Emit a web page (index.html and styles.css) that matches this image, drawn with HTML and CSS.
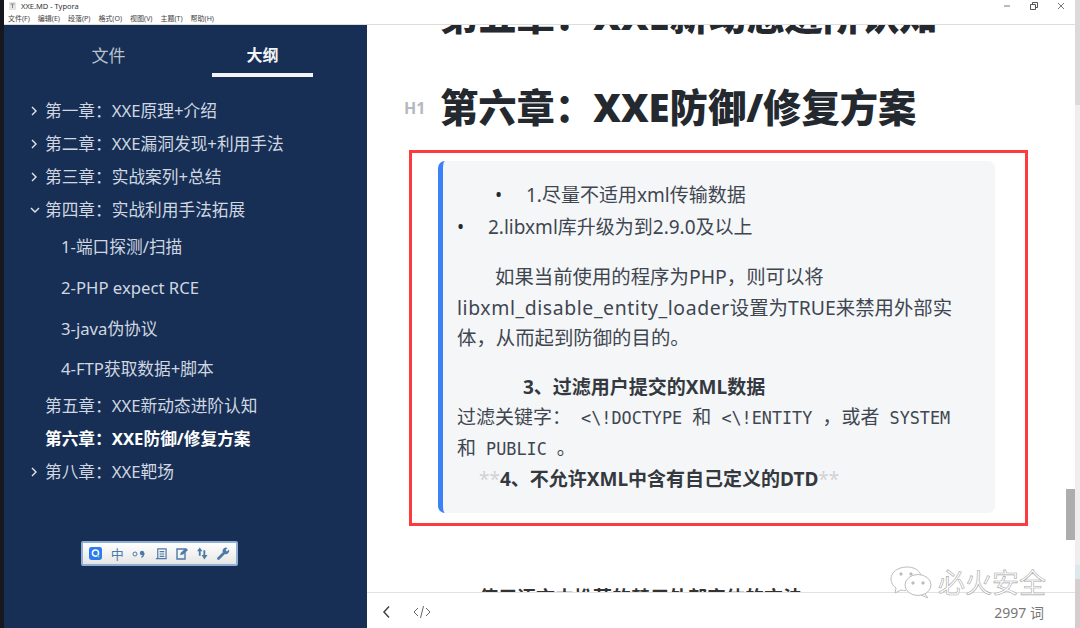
FILE: index.html
```html
<!DOCTYPE html>
<html lang="zh-CN">
<head>
  <meta charset="UTF-8" />
  <title>XXE.MD - Typora</title>
  <link rel="stylesheet" href="styles.css">
</head>
<body>
  <div class="titlebar">
    <svg class="app-icon" width="7" height="8" viewBox="0 0 7 8"><rect width="7" height="8" fill="#e4e4e4"/><path d="M1.500 2h4M3.500 2v4" stroke="#888" fill="none"/></svg>
    <span class="title-text">XXE.MD - Typora</span>
    <div class="win-btns">
      <svg width="8" height="8" viewBox="0 0 8 8"><path d="M1 4h6" stroke="#777"/></svg>
      <svg width="8" height="8" viewBox="0 0 8 8"><path d="M.5 2.500h5v5h-5zM2.500 2.500v-2h5v5h-2" stroke="#555" fill="none"/></svg>
      <svg width="8" height="8" viewBox="0 0 8 8"><path d="M1 1l6 6M7 1l-6 6" stroke="#777"/></svg>
    </div>
  </div>
  <div class="menubar">
    <span>文件(F)</span><span>编辑(E)</span><span>段落(P)</span><span>格式(O)</span><span>视图(V)</span><span>主题(T)</span><span>帮助(H)</span>
  </div>

  <div class="main">
    <aside class="sidebar">
      <div class="tabs">
        <div class="tab">文件</div>
        <div class="tab active">大纲</div>
      </div>
      <ul class="outline">
        <li class="item"><svg class="chev" viewBox="0 0 8 10"><path d="M2 1l4 4-4 4"/></svg>第一章：XXE原理+介绍</li>
        <li class="item"><svg class="chev" viewBox="0 0 8 10"><path d="M2 1l4 4-4 4"/></svg>第二章：XXE漏洞发现+利用手法</li>
        <li class="item"><svg class="chev" viewBox="0 0 8 10"><path d="M2 1l4 4-4 4"/></svg>第三章：实战案列+总结</li>
        <li class="item"><svg class="chev down" viewBox="0 0 10 8"><path d="M1 2l4 4 4-4"/></svg>第四章：实战利用手法拓展</li>
        <li class="sub">1-端口探测/扫描</li>
        <li class="sub">2-PHP expect RCE</li>
        <li class="sub">3-java伪协议</li>
        <li class="sub">4-FTP获取数据+脚本</li>
        <li class="item noarrow">第五章：XXE新动态进阶认知</li>
        <li class="item noarrow current">第六章：XXE防御/修复方案</li>
        <li class="item"><svg class="chev" viewBox="0 0 8 10"><path d="M2 1l4 4-4 4"/></svg>第八章：XXE靶场</li>
      </ul>
      <div class="ime">
        <svg width="13" height="13" viewBox="0 0 16 16"><rect width="16" height="16" rx="3" fill="#2b7cf0"/><circle cx="8" cy="7.500" r="3.800" fill="none" stroke="#fff" stroke-width="1.800"/><path d="M10 10l2.500 2.500" stroke="#7fd67f" stroke-width="1.800"/></svg>
        <span class="ime-zh">中</span>
        <svg width="14" height="10" viewBox="0 0 14 10"><circle cx="3" cy="5" r="2" fill="none" stroke="#4d7aa6"/><circle cx="10" cy="4" r="2.200" fill="#4d7aa6"/><path d="M12 4q0 3-2.500 4.500" stroke="#4d7aa6" fill="none" stroke-width="1.400"/></svg>
        <svg width="12" height="12" viewBox="0 0 13 13" fill="none" stroke="#4d7aa6" stroke-width="1.300"><path d="M3 1h9v10.500H1h2zM5 4h5M5 6.500h5M5 9h5"/></svg>
        <svg width="13" height="13" viewBox="0 0 13 13"><path d="M1 2h8v10H1z" fill="none" stroke="#4d7aa6" stroke-width="1.400"/><path d="M4 8l1-2.500L10 1l2 2-5 4.500z" fill="#4d7aa6"/></svg>
        <svg width="11" height="13" viewBox="0 0 12 13" fill="#4d7aa6"><path d="M3 0l3 4H4v5H2V4H0zM7 3h2v5h2.500L8 13 5 8h2z"/></svg>
        <svg width="13" height="13" viewBox="0 0 13 13"><path d="M1.500 11.500L6.500 6.500" stroke="#4d7aa6" stroke-width="2.800" stroke-linecap="round"/><path d="M5.500 4.500a3.500 3.500 0 0 1 5-3.500L8.500 3l1.500 1.500 2-2a3.500 3.500 0 0 1-4.500 4.500z" fill="#4d7aa6"/></svg>
      </div>
    </aside>

    <div class="content">
      <div class="doc">
        <h1 class="prev-h">第五章：XXE新动态进阶认知</h1>
        <div class="h-row">
          <span class="h-mark">H1</span>
          <h1>第六章：XXE防御/修复方案</h1>
        </div>
        <div class="red-box">
          <blockquote class="quote">
            <div class="li nested"><span class="dot">•</span>1.尽量不适用xml传输数据</div>
            <div class="li"><span class="dot">•</span>2.libxml库升级为到2.9.0及以上</div>
            <p class="para">如果当前使用的程序为PHP，则可以将<span class="wide">libxml_disable_entity_loader</span>设置为TRUE来禁用外部实体，从而起到防御的目的。</p>
            <p class="bold-line"><strong>3、过滤用户提交的XML数据</strong></p>
            <p class="code-line">过滤关键字：<code> &lt;\!DOCTYPE </code>和<code> &lt;\!ENTITY </code>，或者<code> SYSTEM </code>和<code> PUBLIC </code>。</p>
            <p class="last-line"><span class="stars">**</span><strong>4、不允许XML中含有自己定义的DTD</strong><span class="stars">**</span></p>
          </blockquote>
        </div>
        <p class="cut-line">使用语言中推荐的禁用外部实体的方法</p>
      </div>
      <div class="footer">
        <svg class="back" width="9" height="14" viewBox="0 0 9 14"><path d="M7 1.500L2 7l5 5.500"/></svg>
        <svg class="src" width="18" height="14" viewBox="0 0 18 14"><path d="M5 3L1 7l4 4M13 3l4 4-4 4M10.500 1L7.500 13"/></svg>
        <span class="words">2997 词</span>
      </div>
      <div class="watermark">
        <svg width="42" height="33" viewBox="0 0 42 33" fill="none" stroke="#bdbdbd"><path d="M17 1C8 1 1 6 1 13c0 4 2 7 5 9l-1 5 6-3c2 .5 3 .7 5 .7"/><path d="M31 9C29 4 24 1 17 1"/><ellipse cx="28" cy="19" rx="13" ry="10.500" fill="#fff"/><path d="M35 28l3 4-7-3"/><circle cx="11" cy="8" r="1.200" fill="#bbb"/><circle cx="21" cy="8" r="1.200" fill="#bbb"/><circle cx="23" cy="17" r="1.200" fill="#bbb"/><circle cx="33" cy="17" r="1.200" fill="#bbb"/></svg>
        <span>必火安全</span>
      </div>
    </div>
  </div>
  <div class="scrollbar"><div class="thumb"></div></div>
</body>
</html>
```
FILE: styles.css
```css
* {
  box-sizing: border-box;
}
html, body {
  margin: 0;
  height: 100%;
  overflow: hidden;
  background: #fff;
  font-family: "Noto Sans", "Noto Sans CJK SC", sans-serif;
}
body {
  border-left: 4px solid #15191f;
}
ul {
  list-style: none;
  margin: 0;
  padding: 0;
}

/* Barre de titre */
.titlebar {
  height: 12px;
  display: flex;
  align-items: center;
  padding-left: 5px;
  font-size: 7.500px;
  color: #333;
}
.app-icon {
  margin-right: 2px;
  margin-left: 0;
}
.title-text {
  margin-left: 3px;
}
.win-btns {
  margin-left: auto;
  margin-right: 15px;
  display: flex;
  gap: 19px;
}
.menubar {
  height: 13px;
  display: flex;
  gap: 8px;
  padding: 0 0 0 4px;
  font-size: 7px;
  line-height: 14px;
  color: #444;
  border-bottom: 1px solid #ddd;
}

.main {
  display: flex;
  height: 603px;
}

/* Sidebar */
.sidebar {
  width: 363px;
  background: #172f55;
  color: #d0d7e0;
  position: relative;
}
.tabs {
  display: flex;
  height: 52px;
  padding: 15px 54px 0 54px;
  justify-content: space-between;
}
.tab {
  width: 101px;
  text-align: center;
  font-size: 17px;
  line-height: 31px;
  height: 37px;
  color: #b9c1cd;
}
.tab.active {
  font-size: 16px;
  color: #f2f4f6;
  font-weight: 700;
  border-bottom: 4px solid #f2f4f6;
}
.outline {
  padding-top: 17px;
  font-size: 16.700px;
}
.item {
  height: 33px;
  line-height: 33px;
  display: flex;
  align-items: center;
  padding-left: 26px;
}
.noarrow {
  padding-left: 41px;
}
.current {
  color: #fff;
  font-weight: 700;
}
.chev {
  width: 8px;
  height: 10px;
  margin-right: 7px;
  fill: none;
  stroke: #e2e6ec;
  stroke-width: 1.400;
}
.chev.down {
  width: 10px;
  height: 8px;
  margin-right: 5px;
}
.sub {
  height: 40.750px;
  line-height: 41px;
  padding-left: 57px;
}
.ime {
  position: absolute;
  left: 77px;
  top: 516px;
  width: 157px;
  height: 25px;
  display: flex;
  align-items: center;
  justify-content: space-between;
  padding: 0 6px;
  background: linear-gradient(#fff, #e6e6e6);
  border: 2px solid #8fb0d4;
  border-radius: 2px;
}
.ime-zh {
  font-size: 13px;
  color: #4d7aa6;
  line-height: 16px;
}

/* Contenu */
.content {
  flex: 1;
  position: relative;
  overflow: hidden;
  background: #fff;
}
.doc {
  padding-left: 73px;
  width: 660px;
}
.doc h1 {
  margin: 0;
  font-size: 38.300px;
  font-weight: 900;
  color: #24292f;
  line-height: 52px;
  white-space: nowrap;
}
.doc .prev-h {
  margin-top: -36px;
}
.h-row {
  position: relative;
  margin-top: 40px;
}
.h-mark {
  position: absolute;
  left: -36px;
  top: 16px;
  font-size: 16px;
  font-weight: 700;
  color: #b5b9be;
  line-height: 22px;
}
.red-box {
  margin: 17px 0 0 -31px;
  width: 619px;
  height: 376px;
  border: 3px solid #fb3b3e;
  padding: 8px 0 0 26px;
}
.quote {
  margin: 0;
  width: 557px;
  height: 352px;
  background: #f5f6f8;
  border-left: 5px solid #3b82f6;
  border-radius: 7px;
  padding: 19px 40px 0 14px;
  font-size: 19px;
  line-height: 31px;
  color: #3f4650;
}
.li {
  display: flex;
  height: 32px;
}
.dot {
  width: 31px;
  color: #24292f;
}
.nested {
  padding-left: 38px;
}
.para {
  margin: 18px 0 0;
  text-indent: 38px;
  line-height: 30.500px;
  font-size: 19.400px;
}
.wide {
  letter-spacing: 0.600px;
}
.bold-line {
  margin: 18px 0 0;
  padding-left: 66px;
}
.bold-line strong, .last-line strong {
  color: #33393f;
}
.code-line {
  margin: -1px 0 0;
}
.code-line code {
  font-family: "DejaVu Sans Mono", monospace;
  font-size: 16.800px;
  line-height: 1;
}
.last-line {
  margin: 0;
  padding-left: 22px;
}
.stars {
  color: #d0d2d5;
}
.cut-line {
  margin: 57px 0 0 39px;
  font-size: 19px;
  font-weight: 700;
  color: #333;
  line-height: 30px;
}
.scrollbar {
  position: absolute;
  right: 0;
  top: 0;
  bottom: 0;
  width: 5px;
  background: linear-gradient(#dadada 105px, #eee 105px, #eee 565px, #dbe8ec 565px, #dbe8ec 579px, #d6cece 579px);
}
.thumb {
  position: absolute;
  top: 489px;
  left: -9px;
  width: 9px;
  height: 51px;
  background: #adadad;
}
.watermark {
  position: absolute;
  left: 523px;
  top: 541px;
  display: flex;
  align-items: center;
  gap: 6px;
  color: #fff;
  font-size: 27px;
  line-height: 33px;
  -webkit-text-stroke: 0.600px #a8a8a8;
}
.footer {
  position: absolute;
  left: 0;
  right: 5px;
  bottom: 0;
  height: 36px;
  background: #fff;
  border-top: 1px solid #e2e2e2;
  display: flex;
  align-items: center;
  padding: 3px 36px 0 15px;
  color: #777;
}
.back {
  fill: none;
  stroke: #444;
  stroke-width: 1.500;
}
.src {
  margin-left: 22px;
  fill: none;
  stroke: #666;
  stroke-width: 1;
}
.words {
  margin-left: auto;
  font-size: 14px;
  margin-right: -5px;
}
```
